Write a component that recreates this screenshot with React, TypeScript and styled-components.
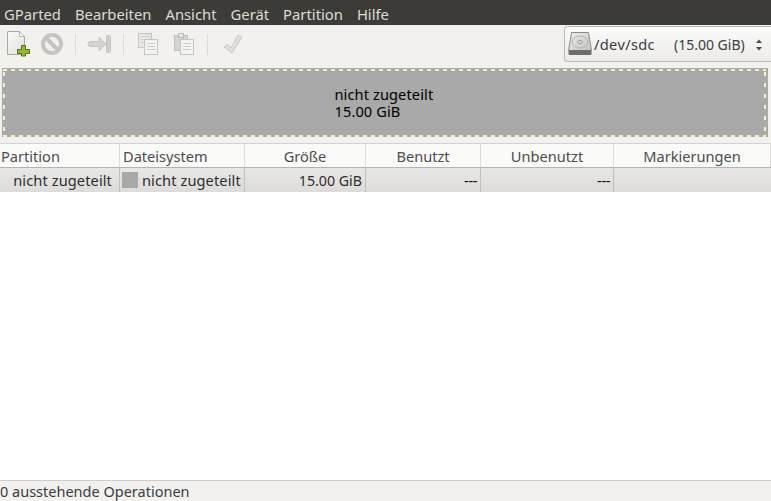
import React from "react";
import styled, { createGlobalStyle } from "styled-components";

const Global = createGlobalStyle`
  html, body { margin: 0; padding: 0; height: 100%; background: #fff; }
  body { font-family: "Noto Sans", "Open Sans", sans-serif; font-size: 14.6px; color: #3c3c3c; }
  #root { height: 100%; }
`;

const Window = styled.div`
  width: 771px;
  height: 501px;
  display: flex;
  flex-direction: column;
  overflow: hidden;
`;

const MenuBar = styled.div`
  height: 25px;
  flex: none;
  display: flex;
  align-items: center;
  gap: 14px;
  padding: 2px 0 0 4px;
  box-sizing: border-box;
  background: #3c3b37;
  color: #dfdbd2;
  font-size: 14.8px;
`;

const Toolbar = styled.div`
  height: 40px;
  flex: none;
  box-sizing: border-box;
  display: flex;
  align-items: center;
  padding: 0 0 2px 5px;
  background: #f2f1f0;
`;

const ToolIcon = styled.svg<{ $gap?: number }>`
  width: 24px;
  height: 24px;
  flex: none;
  display: block;
  overflow: visible;
  margin-right: ${(p) => p.$gap ?? 11}px;
`;

const ToolSep = styled.div`
  width: 1px;
  height: 21px;
  flex: none;
  background: #dcdad7;
  margin-right: 12px;
`;

const DeviceCombo = styled.div`
  margin-left: auto;
  width: 207px;
  height: 36px;
  box-sizing: border-box;
  display: flex;
  align-items: center;
  border: 1px solid #bdbab5;
  border-right: none;
  border-radius: 4px 0 0 4px;
  background: linear-gradient(#fbfbfa, #ecebe9);
  padding-left: 3px;
  color: #3c3c3c;
  position: relative;
`;

const DevicePath = styled.span`
  width: 80px;
  margin-left: 2px;
  flex: none;
  letter-spacing: 0.35px;
`;

const DeviceSize = styled.span`
  flex: none;
  font-size: 14px;
`;

const Spinner = styled.svg`
  position: absolute;
  right: 8px;
  top: 11px;
`;

const MapPanel = styled.div`
  height: 78px;
  flex: none;
  box-sizing: border-box;
  padding: 3px 3px 6px 2px;
  background: #f2f1f0;
`;

const Unallocated = styled.div`
  height: 100%;
  position: relative;
  background: #a9a9a9;
  color: #000;
  display: flex;
  justify-content: center;
  align-items: center;
  &::before {
    content: "";
    position: absolute;
    inset: 1px 2px 0 1px;
    --dash-x: repeating-linear-gradient(90deg, #f7f3b0 0 4px, transparent 4px 8px);
    --dash-y: repeating-linear-gradient(180deg, transparent 0 3px, #f7f3b0 3px 7px, transparent 7px 11px);
    background:
      var(--dash-x) left top / 100% 2px no-repeat,
      var(--dash-x) left bottom / 100% 2px no-repeat,
      var(--dash-y) left top / 2px 100% no-repeat,
      var(--dash-y) right top / 2px 100% no-repeat;
  }
`;

const MapLabel = styled.div`
  width: 100px;
  line-height: 17px;
  letter-spacing: 0.1px;
  margin-left: -1px;
`;

const Table = styled.div`
  flex: 1;
  background: #fff;
  border-top: 1px solid #d6d4d0;
`;

const Columns = styled.div`
  display: grid;
  grid-template-columns: 120px 125px 121px 115px 133px 1fr;
`;

const HeadCell = styled.div<{ $pad?: number }>`
  height: 24px;
  box-sizing: border-box;
  padding: 1px 0 0 ${(p) => p.$pad ?? 0}px;
  display: flex;
  align-items: center;
  justify-content: ${(p) => (p.$pad ? "flex-start" : "center")};
  background: #fbfbfa;
  border-right: 1px solid #dddbd8;
  border-bottom: 1px solid #b5b3ae;
  color: #4c4c4c;
  &:last-child { border-right: none; }
`;

const Cell = styled.div<{ $start?: boolean; $padRight?: number; $size?: number }>`
  height: 24px;
  box-sizing: border-box;
  padding: 0 ${(p) => p.$padRight ?? 3}px 0 2px;
  display: flex;
  align-items: center;
  gap: 4px;
  justify-content: ${(p) => (p.$start ? "flex-start" : "flex-end")};
  background: linear-gradient(#e8e7e5, #dedcda);
  border-right: 1px solid #c2c0bb;
  color: #2e2e2e;
  font-size: ${(p) => p.$size ?? 14.6}px;
  letter-spacing: ${(p) => (p.$size ? 0 : 0.1)}px;
  &:last-child { border-right: none; }
`;

const Dashes = styled(Cell)`
  color: #111;
  letter-spacing: -0.4px;
`;

const Swatch = styled.span`
  width: 16px;
  height: 16px;
  flex: none;
  background: #a9a9a9;
`;

const StatusBar = styled.div`
  height: 21px;
  flex: none;
  box-sizing: border-box;
  display: flex;
  align-items: center;
  background: #f2f1f0;
  border-top: 1px solid #d0cec9;
  font-size: 14.5px;
`;

const menus = ["GParted", "Bearbeiten", "Ansicht", "Gerät", "Partition", "Hilfe"];
const heads = [
  { label: "Partition", pad: 1 },
  { label: "Dateisystem", pad: 3 },
  { label: "Größe" },
  { label: "Benutzt" },
  { label: "Unbenutzt" },
  { label: "Markierungen" },
];

const App = () => (
  <Window>
    <Global />
    <MenuBar>
      {menus.map((m) => (
        <span key={m}>{m}</span>
      ))}
    </MenuBar>
    <Toolbar>
      <ToolIcon viewBox="0 0 24 24">
        <defs>
          <linearGradient id="page" x1="0" y1="0" x2="1" y2="1">
            <stop offset="0" stopColor="#fbfbfa" />
            <stop offset="1" stopColor="#dededc" />
          </linearGradient>
        </defs>
        <path d="M2.5 -0.5h12l5 5v18h-17z" fill="url(#page)" stroke="#a9a9a6" />
        <path d="M14.5 -0.5v5h5z" fill="#fff" stroke="#b5b5b2" />
        <path d="M16.5 13.5h4v4h4v4h-4v2.5h-4v-2.5h-4v-4h4z" fill="#93b82d" stroke="#4f7412" />
      </ToolIcon>
      <ToolIcon viewBox="0 0 24 24">
        <circle cx="12" cy="12" r="9" fill="none" stroke="#c6c4c1" strokeWidth="4" />
        <path d="M6 6l12 12" stroke="#c6c4c1" strokeWidth="4" />
      </ToolIcon>
      <ToolSep />
      <ToolIcon viewBox="0 0 24 24">
        <path d="M2.5 9.5h8.5V5l7 7-7 7v-4.5H2.5a2.5 2.5 0 0 1 0-5z" fill="#d6d4d1" stroke="#c8c6c2" strokeLinejoin="round" />
        <rect x="18.5" y="3.5" width="4" height="17" rx="1" fill="#d0cecb" stroke="#c4c2be" />
      </ToolIcon>
      <ToolSep />
      <ToolIcon viewBox="0 0 24 24" $gap={12}>
        <rect x="2.5" y="1.5" width="13" height="14" fill="#e8e7e5" stroke="#c6c4c1" />
        <path d="M4.5 4.5h9M4.5 7.5h4M4.5 10.5h4" stroke="#d2d0cd" />
        <rect x="8.5" y="7.5" width="13" height="15" fill="#f4f4f3" stroke="#c6c4c1" />
        <path d="M11 11.5h8M11 14.5h8M11 17.5h8" stroke="#cfcdca" />
      </ToolIcon>
      <ToolIcon viewBox="0 0 24 24">
        <rect x="2.5" y="3.5" width="13" height="15" fill="#d6d4d1" stroke="#c2c0bc" />
        <rect x="6.5" y="1.5" width="5" height="4" fill="#e6e5e3" stroke="#bdbbb7" />
        <rect x="8.5" y="7.5" width="13" height="15" fill="#f4f4f3" stroke="#c6c4c1" />
        <path d="M11 11.5h8M11 14.5h8M11 17.5h8" stroke="#cfcdca" />
      </ToolIcon>
      <ToolSep />
      <ToolIcon viewBox="0 0 24 24" $gap={0}>
        <path d="M4 15l3-3 4 4L18 3l4 2-10 16z" fill="#e0dfdc" stroke="#cbc9c5" strokeLinejoin="round" />
      </ToolIcon>
      <DeviceCombo>
        <svg width="24" height="24" viewBox="0 0 24 24">
          <defs>
            <linearGradient id="hdd" x1="0" y1="0" x2="1" y2="1">
              <stop offset="0" stopColor="#ececea" />
              <stop offset="1" stopColor="#c4c4c1" />
            </linearGradient>
          </defs>
          <path d="M3.5 0.5h17l3 18H0.5z" fill="url(#hdd)" stroke="#8d8d8a" />
          <ellipse cx="12" cy="10" rx="8" ry="6" fill="none" stroke="#b4b4b0" />
          <ellipse cx="12" cy="10" rx="2.5" ry="1.6" fill="none" stroke="#a4a4a0" />
          <rect x="0.5" y="18" width="23" height="5" rx="1" fill="#6d6d6a" />
        </svg>
        <DevicePath>/dev/sdc</DevicePath>
        <DeviceSize>(15.00 GiB)</DeviceSize>
        <Spinner width="8" height="14" viewBox="0 0 8 14">
          <path d="M4 1.5l3 3.5H1zM4 12.5l3-3.5H1z" fill="#4c4c4c" />
        </Spinner>
      </DeviceCombo>
    </Toolbar>
    <MapPanel>
      <Unallocated>
        <MapLabel>
          nicht zugeteilt
          <br />
          15.00 GiB
        </MapLabel>
      </Unallocated>
    </MapPanel>
    <Table>
      <Columns>
        {heads.map((h) => (
          <HeadCell key={h.label} $pad={h.pad}>
            {h.label}
          </HeadCell>
        ))}
        <Cell $padRight={7}>nicht zugeteilt</Cell>
        <Cell $start>
          <Swatch />
          nicht zugeteilt
        </Cell>
        <Cell $size={14.2}>15.00 GiB</Cell>
        <Dashes>---</Dashes>
        <Dashes>---</Dashes>
        <Cell />
      </Columns>
    </Table>
    <StatusBar>0 ausstehende Operationen</StatusBar>
  </Window>
);

export default App;
